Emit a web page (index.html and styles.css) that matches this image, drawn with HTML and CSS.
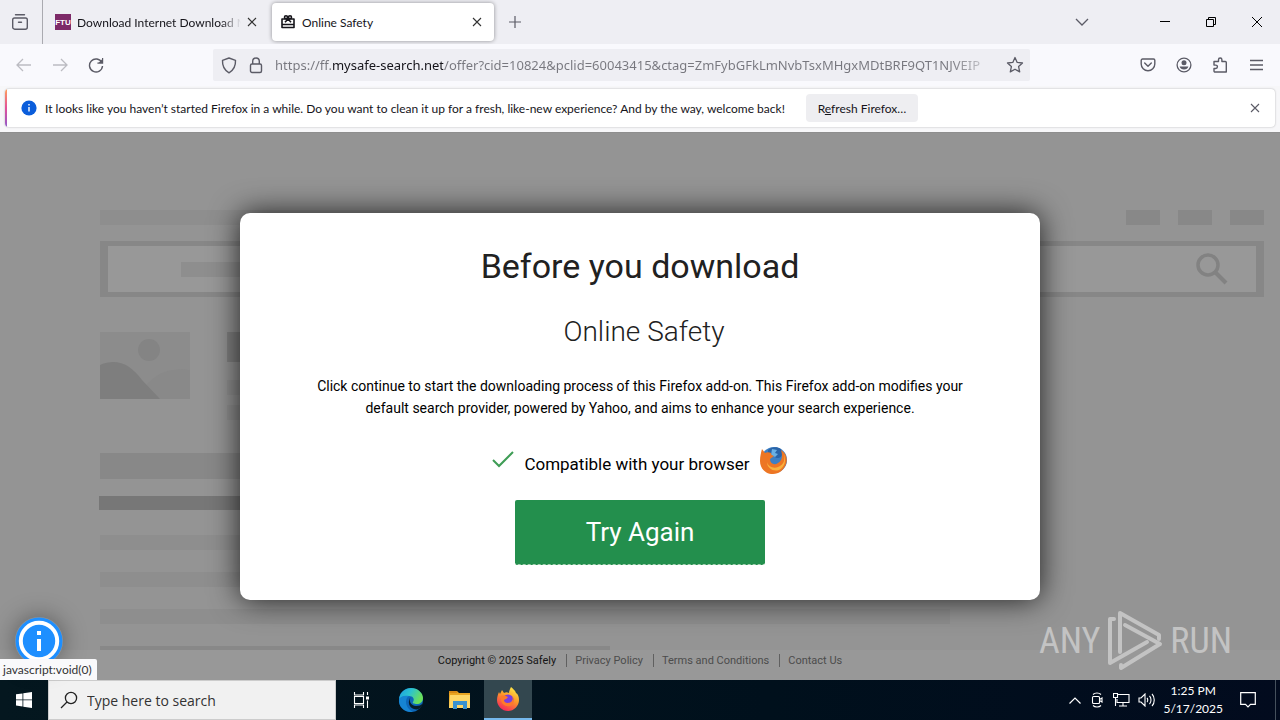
FILE: index.html
```html
<!DOCTYPE html>
<html lang="en">
<head>
<meta charset="utf-8">
<title>Online Safety</title>
<link rel="stylesheet" href="styles.css">
</head>
<body>
<header class="tabbar">
  <button class="icon-btn recent" aria-label="Recent browsing">
    <svg width="18" height="18" viewBox="0 0 18 18" fill="none" stroke="#5b5b66" stroke-width="1.4" stroke-linecap="round"><path d="M4.5 1.7h9M3.5 5h11a1.8 1.8 0 0 1 1.8 1.8v7.4a2 2 0 0 1-2 2H3.700a2 2 0 0 1-2-2V6.800A1.800 1.800 0 0 1 3.500 5zM7.500 9.300h3"/></svg>
  </button>
  <div class="tab">
    <span class="favicon">FTU</span>
    <span class="tab-title fade">Download Internet Download M</span>
    <button class="icon-btn" aria-label="Close tab"><svg width="10" height="10" viewBox="0 0 10 10" stroke="#333" stroke-width="1.100"><path d="M1 1l8 8M9 1l-8 8"/></svg></button>
  </div>
  <div class="tab tab-active">
    <svg width="16" height="16" viewBox="0 0 16 16" fill="none" stroke="#15141a" stroke-width="1.600" stroke-linejoin="round"><path d="M2 5h12v8.500H2zM2 10.500h12M8 5L5 8.300M8 5l3 3.300"/><circle cx="6" cy="3.200" r="1.500"/><circle cx="10" cy="3.200" r="1.500"/></svg>
    <span class="tab-title">Online Safety</span>
    <button class="icon-btn" aria-label="Close tab"><svg width="10" height="10" viewBox="0 0 10 10" stroke="#333" stroke-width="1.100"><path d="M1 1l8 8M9 1l-8 8"/></svg></button>
  </div>
  <button class="icon-btn newtab" aria-label="New tab"><svg width="12" height="12" viewBox="0 0 12 12" stroke="#5b5b66" stroke-width="1.200"><path d="M6 0v12M0 6h12"/></svg></button>
  <div class="window-controls">
    <button class="icon-btn list-tabs" aria-label="List all tabs"><svg width="14" height="10" viewBox="0 0 14 10" fill="none" stroke="#5b5b66" stroke-width="1.300"><path d="M1 2l6 6 6-6"/></svg></button>
    <button class="icon-btn win" aria-label="Minimize"><svg width="10" height="10" viewBox="0 0 10 10" stroke="#000"><path d="M0 4.500h10"/></svg></button>
    <button class="icon-btn win" aria-label="Restore"><svg width="10" height="10" viewBox="0 0 10 10" fill="none" stroke="#000"><path d="M.500 2.500h7v7H.500zM2.500 2.500v-2h7v7h-2"/></svg></button>
    <button class="icon-btn win" aria-label="Close"><svg width="10" height="10" viewBox="0 0 10 10" stroke="#000"><path d="M0 0l10 10M10 0L0 10"/></svg></button>
  </div>
</header>
<nav class="toolbar">
  <button class="icon-btn tool" aria-label="Back"><svg width="16" height="14" viewBox="0 0 16 14" fill="none" stroke="#bcbcc2" stroke-width="1.300"><path d="M15 7H1.500M7 1L1 7l6 6"/></svg></button>
  <button class="icon-btn tool" aria-label="Forward"><svg width="16" height="14" viewBox="0 0 16 14" fill="none" stroke="#bcbcc2" stroke-width="1.300"><path d="M1 7h13.500M9 1l6 6-6 6"/></svg></button>
  <button class="icon-btn tool" aria-label="Reload"><svg width="16" height="16" viewBox="0 0 16 16" fill="none" stroke="#5b5b66" stroke-width="1.400"><path d="M13.800 5.500A6.500 6.500 0 1 0 14.500 9"/><path d="M14.600 1v5.200H9.400" stroke-width="1.200"/><path d="M14.400 2v4H10.400z" fill="#5b5b66" stroke="none"/></svg></button>
  <div class="urlbar">
    <svg width="16" height="17" viewBox="0 0 16 17" fill="none" stroke="#5b5b66" stroke-width="1.400" stroke-linejoin="round"><path d="M8 1l6.500 2.300c.300 5.700-1.500 9.700-6.500 12.500C3 13 1.200 9 1.500 3.300z"/></svg>
    <svg width="14" height="17" viewBox="0 0 14 17" fill="none" stroke="#5b5b66" stroke-width="1.400"><rect x="1.500" y="7" width="11" height="8.500" rx="1.500"/><path d="M3.700 7V4.300a3.300 3.300 0 0 1 6.600 0V7"/></svg>
    <input class="url" type="text" aria-label="Address" value="https://ff.mysafe-search.net/offer?cid=10824&amp;pclid=60043415&amp;ctag=ZmFybGFkLmNvbTsxMHgxMDtBRF9QT1NJVEIP">
    <button class="icon-btn" aria-label="Bookmark"><svg width="18" height="18" viewBox="0 0 18 18" fill="none" stroke="#5b5b66" stroke-width="1.300" stroke-linejoin="round"><path d="M9 1.500l2.200 4.900 5.300.600-3.900 3.600 1.100 5.300L9 13.200l-4.700 2.700 1.100-5.300L1.500 7l5.300-.600z"/></svg></button>
  </div>
  <div class="tools">
    <button class="icon-btn tool" aria-label="Pocket"><svg width="16" height="14" viewBox="0 0 16 14" fill="none" stroke="#5b5b66" stroke-width="1.400" stroke-linecap="round" stroke-linejoin="round"><path d="M2.500 1h11a1.300 1.300 0 0 1 1.300 1.300V6a6.800 6.800 0 0 1-13.600 0V2.300A1.300 1.300 0 0 1 2.500 1zM4.700 5L8 8.200 11.300 5"/></svg></button>
    <button class="icon-btn tool" aria-label="Account"><svg width="16" height="16" viewBox="0 0 16 16"><circle cx="8" cy="8" r="6.900" fill="none" stroke="#5b5b66" stroke-width="1.300"/><circle cx="8" cy="5.800" r="2.500" fill="#5b5b66"/><path d="M3.600 9.500h8.800c-.500 2-2.300 3-4.400 3s-3.900-1-4.400-3z" fill="#5b5b66"/></svg></button>
    <button class="icon-btn tool" aria-label="Extensions"><svg width="16" height="16" viewBox="0 0 16 16" fill="none" stroke="#5b5b66" stroke-width="1.400" stroke-linejoin="round"><path d="M6.500 4.500V2.700a1.700 1.700 0 0 1 3.400 0v1.800h3.400a1 1 0 0 1 1 1V15H3a1 1 0 0 1-1-1v-2.500h1.700a1.700 1.700 0 0 0 0-3.400H2V4.500z"/></svg></button>
    <button class="icon-btn tool" aria-label="Menu"><svg width="13" height="12" viewBox="0 0 13 12" stroke="#5b5b66" stroke-width="1.300"><path d="M0 1.500h13M0 6h13M0 10.500h13"/></svg></button>
  </div>
</nav>
<section class="notice-wrap">
  <div class="notice">
    <svg width="16" height="16" viewBox="0 0 16 16"><circle cx="8" cy="8" r="7.600" fill="#0a5ddb"/><path d="M8 7v4.500M8 4v1.500" stroke="#fff" stroke-width="1.400"/></svg>
    <span class="notice-text">It looks like you haven’t started Firefox in a while. Do you want to clean it up for a fresh, like-new experience? And by the way, welcome back!</span>
    <button class="refresh">R<u>e</u>fresh Firefox…</button>
    <button class="icon-btn notice-close" aria-label="Dismiss"><svg width="10" height="10" viewBox="0 0 10 10" stroke="#5b5b66" stroke-width="1.100"><path d="M1 1l8 8M9 1l-8 8"/></svg></button>
  </div>
</section>
<main class="page">
  <div class="skeleton" aria-hidden="true">
    <div class="sk-top"><span class="bar light"></span><span class="chip"></span><span class="chip"></span><span class="chip"></span></div>
    <div class="sk-search">
      <span class="bar light"></span>
      <svg width="34" height="34" viewBox="0 0 34 34" fill="none" stroke="#828282"><circle cx="13" cy="13" r="10" stroke-width="3.500"/><path d="M20 20l11 11" stroke-width="4"/></svg>
    </div>
    <div class="sk-media">
      <svg width="90" height="67" viewBox="0 0 90 67"><path fill="#8c8c8c" d="M0 0h90v67H0z"/><circle cx="49" cy="18" r="11" fill="#848484"/><path d="M48 51C61 38 75 36 90 38v29H34z" fill="#898989"/><path d="M0 33c17-7 30-1 42 15l18 19H0z" fill="#7e7e7e"/></svg>
      <div class="sk-lines"><span class="bar dark"></span><span class="bar light"></span><span class="bar light"></span></div>
    </div>
    <div class="sk-list">
      <span class="bar tall"></span><span class="bar darkest"></span><span class="bar light"></span><span class="bar light"></span><span class="bar light"></span><span class="bar last"></span>
    </div>
  </div>
  <footer class="footer">
    <span class="copy">Copyright © 2025 Safely</span><a href="#">Privacy Policy</a><a href="#">Terms and Conditions</a><a href="#">Contact Us</a>
  </footer>
  <div class="overlay">
    <div class="modal" role="dialog" aria-labelledby="dlg-title">
      <h1 id="dlg-title">Before you download</h1>
      <h2>Online Safety</h2>
      <p class="desc">Click continue to start the downloading process of this Firefox add-on. This Firefox add-on modifies your default search provider, powered by Yahoo, and aims to enhance your search experience.</p>
      <div class="compat">
        <svg class="check" width="22" height="18" viewBox="0 0 22 18" fill="none" stroke="#3f9d56" stroke-width="2"><path d="M1 9l6 6L21 1"/></svg>
        <span>Compatible with your browser</span>
        <svg width="28" height="28" viewBox="0 0 28 28"><circle cx="14" cy="14" r="13" fill="#3d7fc4"/><path d="M8 4c3-3 9-4 13-1 2 3 2 7-2 9-5 1-6-5-11-3z" fill="#2a64a8"/><path d="M12 3l5 1-2 3 3 1-3 3-4-2z" fill="#69b0e4"/><path d="M2 3l3 4c2-1 4-1 6 0 0 2 1 2 3 3l-4 3c0 4 4 7 8 4 4-2 5-7 3-13 5 3 7 9 5 14-2 6-7 10-13 10C5 28 0 22 0 15 0 10 1 7 2 3z" fill="#ed7624"/><path d="M23 6c3 7 1 13-5 15-5 2-10-1-11-5 0 6 6 10 12 8 6-3 8-10 4-18z" fill="#f9b13c"/></svg>
      </div>
      <button class="try">Try Again</button>
    </div>
  </div>
  <button class="info" aria-label="Information"><svg width="48" height="48" viewBox="0 0 48 48"><circle cx="24" cy="24" r="23.500" fill="#1e8fff"/><circle cx="24" cy="24" r="18.200" fill="none" stroke="#fff" stroke-width="4"/><path d="M24 22v12M24 14v4" stroke="#fff" stroke-width="4"/></svg></button>
  <div class="status">javascript:void(0)</div>
  <div class="watermark">
    <span>ANY</span>
    <svg width="56" height="62" viewBox="0 0 56 62" fill="none" stroke="#c3c3c3" stroke-width="4" stroke-linejoin="round" stroke-linecap="round"><path d="M13 42V3l39 22v4"/><path d="M7 9L3 9v44l37-21M18 15l35 19L14 58v-3"/></svg>
    <span>RUN</span>
  </div>
</main>
<footer class="taskbar">
  <button class="task start" aria-label="Start"><svg width="16" height="16" viewBox="0 0 16 16" fill="#fff"><path d="M0 2.300l6.500-.900v6.100H0zM7.300 1.300L16 0v7.500H7.300zM0 8.300h6.500v6.200L0 13.600zM7.300 8.300H16V16l-8.700-1.300z"/></svg></button>
  <label class="search">
    <svg width="18" height="18" viewBox="0 0 18 18" fill="none" stroke="#222" stroke-width="1.300"><circle cx="11" cy="7" r="5.600"/><path d="M7 11L1 17"/></svg>
    <input type="text" placeholder="Type here to search" aria-label="Type here to search">
  </label>
  <button class="task" aria-label="Task view"><svg width="17" height="16" viewBox="0 0 17 16" fill="none" stroke="#fff" stroke-width="1.100"><path d="M1.500 0v3h9V0M1.500 16v-3h9v3M1.500 4.500h9v7h-9zM14.500 0v3M14.500 8.500V16"/><path d="M13 4.500h3v3h-3z" fill="#fff" stroke="none"/></svg></button>
  <button class="task" aria-label="Edge"><svg width="26" height="26" viewBox="0 0 26 26"><defs><linearGradient id="eg" x1="0" y1="0" x2="1" y2=".4"><stop offset="0" stop-color="#1b9de2"/><stop offset=".5" stop-color="#2cc3cf"/><stop offset="1" stop-color="#6be05a"/></linearGradient></defs><circle cx="13" cy="13" r="12" fill="#0d67b9"/><path d="M1 12C2 5 7 1 13 1c7 0 12 5 12 10 0 4-3 6-6 6-3 0-5-1-4-2 2-3 0-6-4-6-5 0-8 1-10 3z" fill="url(#eg)"/><path d="M1 12c2-3 6-4 10-3-4 2-4 9 0 13 1 1 2 2 4 3C7 26 0 20 1 12z" fill="#1684d3"/><path d="M13 10c-3 3 0 9 5 9 3 0 5-1 6-2v2c-2 3-5 4-8 3-5-1-7-8-3-12z" fill="#071d27"/></svg></button>
  <button class="task" aria-label="File Explorer"><svg width="22" height="20" viewBox="0 0 22 20"><path d="M0 1h8l2 2h11v15H0z" fill="#e9a522"/><path d="M1 5h20v13H0z" fill="#ffd767"/><path d="M4 11h14v8h-4v-4H8v4H4z" fill="#3992d0"/><path d="M0 1h8v2H0z" fill="#d88a16"/></svg></button>
  <button class="task task-active" aria-label="Firefox"><svg width="24" height="24" viewBox="0 0 24 24"><defs><linearGradient id="ff" x1=".8" y1="0" x2=".3" y2="1"><stop offset="0" stop-color="#fff04a"/><stop offset=".45" stop-color="#ff9a28"/><stop offset="1" stop-color="#f5245c"/></linearGradient></defs><path d="M15 0c2 2 4 3 5 6 2 1 3 4 3 7 0 6-5 11-11 11S1 19 1 13c0-3 1-6 2-8l1 2 2-4 2 3c2-1 3-1 5 0 0-2 1-4 2-6z" fill="url(#ff)"/><circle cx="12" cy="13" r="5.500" fill="#7a3ee0"/><path d="M5 9c3-1 5 0 7 1-1 2-3 2-4 3 0 3 4 4 7 2 2-2 2-4 1-6 3 3 2 9-2 10-5 1-10-2-9-10z" fill="#ff7a2a"/></svg></button>
  <div class="tray">
    <svg width="12" height="7" viewBox="0 0 12 7" fill="none" stroke="#fff" stroke-width="1.200"><path d="M.500 6.500L6 1l5.500 5.500"/></svg>
    <svg width="16" height="16" viewBox="0 0 16 16" fill="none" stroke="#fff" stroke-width="1.100"><rect x="3.500" y="4.500" width="7" height="7" rx="1"/><path d="M10.500 7.500L13 6v4l-2.500-1.500M4 2.500C6 .500 10 .500 12 2.500M4 13.500c2 2 6 2 8 0"/></svg>
    <svg width="17" height="14" viewBox="0 0 17 14" fill="none" stroke="#fff" stroke-width="1.100"><path d="M5 1.500h11v8H4V6M10 9.500v3M6 13h8M.500 .500h4v4h-4zM2.500 4.500V13"/></svg>
    <svg width="17" height="14" viewBox="0 0 17 14" fill="none" stroke="#fff" stroke-width="1.100"><path d="M1 5h2l4-4v12L3 9H1zM9 5c1 1 1 3 0 4M11.500 3c2 2 2 6 0 8M14 1c3 3 3 9 0 12"/></svg>
    <time class="clock">1:25 PM<br>5/17/2025</time>
    <svg width="16" height="16" viewBox="0 0 16 16" fill="none" stroke="#fff" stroke-width="1.200"><path d="M.700 .700h14.600v11.600h-4.800L8 14.800l-2.500-2.500H.700z"/></svg>
    <span class="peek"></span>
  </div>
</footer>
</body>
</html>
```

FILE: styles.css
```css
* { box-sizing: border-box; }
body {
  margin: 0;
  min-height: 100vh;
  display: flex;
  flex-direction: column;
  font-family: "Open Sans", "Noto Sans", sans-serif;
  font-size: 12px;
  color: #15141a;
  overflow: hidden;
}
button { font: inherit; color: inherit; border: 0; background: none; padding: 0; }
input { font: inherit; border: 0; background: none; padding: 0; outline: 0; min-width: 0; }
svg { display: block; flex: none; }
.icon-btn { display: flex; align-items: center; justify-content: center; flex: none; }

.tabbar { display: flex; align-items: center; height: 44px; background: #eeeef3; }
.recent { width: 43px; height: 44px; padding-right: 3px; border-right: 1px solid #aaaab0; }
.tab { display: flex; align-items: center; width: 222px; height: 38px; margin-left: 4px; padding: 0 12px 0 8px; gap: 6px; border-radius: 4px; }
.tab:not(.tab-active) { width: 220px; padding-right: 10px; }
.tab-active { margin-left: 5px; background: #fff; box-shadow: 0 0 4px rgba(0, 0, 0, .4); }
.tab-title { flex: 1; white-space: nowrap; font-family: Lato, sans-serif; font-size: 12px; }
.fade { min-width: 0; mask-image: linear-gradient(to right, #000 88%, transparent 100%); }
.favicon { display: grid; place-items: center; width: 16px; height: 16px; flex: none; background: #7d2a68; color: #fff; font: bold 8px "Liberation Sans", sans-serif; }
.newtab { width: 32px; height: 32px; margin-left: 5px; }
.window-controls { display: flex; margin-left: auto; }
.list-tabs { width: 32px; margin-right: 44px; }
.win { width: 46px; height: 44px; }

.toolbar { display: flex; align-items: center; height: 42px; padding: 0 6px; background: #f9f9fd; }
.tool { width: 36px; height: 32px; }
.urlbar { display: flex; align-items: center; flex: 0 1 817px; height: 32px; margin-left: 99px; padding: 0 6px 0 8px; gap: 12px; background: #eeeef3; border-radius: 2px; }
.url {
  flex: 1;
  margin: 0 -6px 0 0;
  height: 24px;
  font-family: "Noto Sans", sans-serif;
  font-size: 13px;
  color: transparent;
  background: linear-gradient(to right, #77777e 57px, #15141a 57px 168px, #77777e 168px calc(100% - 50px), transparent) text;
  -webkit-background-clip: text;
}
.tools { display: flex; margin-left: auto; }

.notice-wrap { padding: 3px 5px 5px; background: #f7f7f9; border-bottom: 1px solid #8e8e8e; }
.notice { position: relative; display: flex; align-items: center; height: 38px; padding: 0 14px 0 16px; background: #fff; border-radius: 4px; box-shadow: 0 0 2px rgba(0, 0, 0, .3); overflow: hidden; font-family: Lato, sans-serif; }
.notice::before { content: ""; position: absolute; inset: 0 auto 0 0; width: 2px; background: linear-gradient(#ff9f5a, #e2509a, #9059c8); }
.notice-text { flex: 0 1 742px; margin-left: 8px; white-space: nowrap; }
.refresh { width: 112px; height: 28px; margin-left: 19px; background: #eeeef1; border-radius: 4px; flex: none; }
.notice-close { width: 12px; margin-left: auto; }

.page { position: relative; flex: 1; display: flex; flex-direction: column; background: #949494; font-family: Roboto, sans-serif; }
.skeleton { flex: 1 1 0; min-height: 0; overflow: hidden; padding: 77px 16px 0 99px; }
.sk-top, .sk-search, .sk-media, .sk-list { margin-left: 1px; }
.bar { display: block; height: 15px; background: #888; }
.bar.light { background: #8e8e8e; }
.sk-top { display: flex; gap: 18px; }
.sk-top .bar { width: 400px; margin-right: auto; }
.chip { width: 34px; height: 15px; background: #888; }
.sk-search { display: flex; align-items: center; justify-content: space-between; height: 56px; margin-top: 16px; padding: 0 27px 0 73px; border: solid #878787; border-width: 5px 8px; background: #989898; }
.sk-search .bar { width: 300px; }
.sk-media { display: flex; gap: 37px; height: 88px; margin-top: 35px; }
.sk-lines { width: 500px; }
.sk-lines .dark { height: 30px; margin-bottom: 18px; background: #808080; }
.sk-lines .light { margin-bottom: 10px; }
.sk-list { display: grid; margin-top: 33px; width: 850px; }
.sk-list .tall { height: 26px; margin-bottom: 17px; }
.sk-list .darkest { height: 14px; margin-left: -1px; margin-bottom: 25px; background: #777; }
.sk-list .light { margin-bottom: 22px; }
.sk-list .last { width: 510px; }
.footer { display: flex; align-items: center; justify-content: center; height: 30px; padding-bottom: 9px; background: #989898; font-size: 11px; color: #4c4c4c; }
.footer a { color: inherit; text-decoration: none; padding-left: 8px; margin-left: 10px; border-left: 1px solid #606060; }
.copy { color: #151515; }

.overlay { position: absolute; inset: 0; display: flex; align-items: center; justify-content: center; }
.modal { display: flex; flex-direction: column; align-items: center; width: 800px; max-width: 92%; padding: 31px 72px 35px; background: #fff; border-radius: 10px; box-shadow: 0 0 30px rgba(0, 0, 0, .8); text-align: center; }
h1 { margin: 0; font-size: 34px; font-weight: 400; line-height: 44px; color: #212121; }
h2 { margin: 26px 0 0; padding-left: 8px; font-size: 28px; font-weight: 300; line-height: 36px; color: #212121; }
.desc { margin: 25px 0 0; font-size: 14px; line-height: 22px; color: #000; }
.compat { display: flex; align-items: center; gap: 10px; margin-top: 25px; font-size: 17px; line-height: 24px; color: #000; }
.compat span { padding-top: 8px; }
.try { width: 250px; height: 65px; margin-top: 24px; border-bottom: 1px dashed #a6cfb2; border-radius: 2px; background: #238f4d; color: #fff; font-size: 26px; }

.info { position: absolute; left: 15px; bottom: 15px; border-radius: 50%; box-shadow: 0 0 24px rgba(0, 0, 0, .4); }
.status { position: absolute; left: 0; bottom: 0; height: 21px; padding: 0 5px 0 3px; line-height: 22px; background: #f9f9fb; border-top-right-radius: 2px; font-family: Lato, sans-serif; font-size: 12px; color: #333; }
.watermark { position: absolute; right: 48px; bottom: 8px; display: flex; align-items: center; gap: 7px; color: #c3c3c3; font-family: "Liberation Sans Narrow", "Roboto Condensed", "DejaVu Sans Condensed", sans-serif; font-size: 36px; }

.taskbar { display: flex; height: 40px; background: linear-gradient(to right, #04171f, #00101c 60%, #020b1e); color: #fff; }
.task { display: grid; place-items: center; width: 49px; height: 40px; }
.start { width: 48px; }
.search + .task { width: 50px; }
.task-active { width: 48px; background: #33474f; border-bottom: 2px solid #76b9ed; }
.search { display: flex; align-items: center; gap: 9px; width: 288px; padding: 0 11px; background: #f1f1f1; border: 1px solid #ccc; }
.search input { flex: 1; font-size: 14px; }
.search input::placeholder { color: #333; opacity: 1; }
.tray { display: flex; align-items: center; gap: 8px; margin-left: auto; }
.clock { text-align: center; font-family: Lato, sans-serif; font-size: 12px; line-height: 18px; margin-right: 9px; }
.peek { width: 5px; height: 40px; margin-left: 11px; border-left: 1px solid #45505c; }
```
